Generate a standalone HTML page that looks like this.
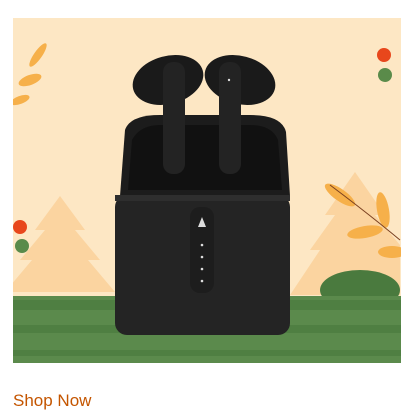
<!DOCTYPE html><html><head><style>
body{margin:0;background:#fff;width:412px;height:413px;overflow:hidden;font-family:"Liberation Sans",sans-serif}
svg{position:absolute;left:13px;top:18px}
a{position:absolute;left:13px;top:391px;color:#c45500;font-size:17px;text-decoration:none}
</style></head><body>
<svg width="388" height="345" viewBox="13 18 388 345">
<rect x="13" y="18" width="388" height="345" fill="#fde7c4"/>
<polygon points="60,196 85,230 75,230 100,260 88,260 115,292 5,292 32,260 20,260 45,230 35,230" fill="#fbd4a0"/>
<polygon points="355,172 385,215 375,215 400,245 400,295 290,295 320,250 310,250 335,215 325,215" fill="#fbd4a0"/>
<circle cx="20" cy="227" r="7" fill="#e8471c"/><circle cx="22" cy="246" r="7" fill="#5a8b4a"/>
<circle cx="384" cy="55" r="7" fill="#e8471c"/><circle cx="385" cy="75" r="7" fill="#5a8b4a"/>
<ellipse cx="30" cy="80" rx="12" ry="5" fill="#f6b04a" transform="rotate(-20 30 80)"/>
<ellipse cx="38" cy="55" rx="14" ry="4" fill="#f6b04a" transform="rotate(-55 38 55)"/>
<ellipse cx="20" cy="100" rx="10" ry="4" fill="#f6b04a" transform="rotate(-20 20 100)"/>
<ellipse cx="340" cy="195" rx="18" ry="6" fill="#f6b04a" transform="rotate(35 340 195)"/>
<ellipse cx="383" cy="210" rx="18" ry="6" fill="#f6b04a" transform="rotate(80 383 210)"/>
<ellipse cx="365" cy="232" rx="18" ry="6" fill="#f6b04a" transform="rotate(-10 365 232)"/>
<ellipse cx="392" cy="252" rx="14" ry="6" fill="#f6b04a"/>
<path d="M330 185 Q370 215 400 240" stroke="#7a4020" fill="none"/>
<ellipse cx="360" cy="290" rx="40" ry="20" fill="#4a7a3e"/>
<rect x="13" y="296" width="388" height="67" fill="#5b8a4c"/>
<rect x="13" y="300" width="388" height="10" fill="#4f7f42"/>
<rect x="13" y="325" width="388" height="8" fill="#4f7f42"/>
<rect x="13" y="350" width="388" height="6" fill="#4f7f42"/>
<path d="M120 196 L125 130 Q130 115 160 115 L250 115 Q282 115 286 132 L290 196 Z" fill="#1c1c1c"/>
<path d="M128 190 L132 140 Q140 125 160 125 L250 125 Q272 125 278 140 L282 190 Z" fill="#111"/>
<rect x="115" y="195" width="175" height="140" rx="12" fill="#242424"/>
<rect x="115" y="195" width="175" height="6" fill="#2e2e2e"/>
<rect x="190" y="207" width="24" height="86" rx="10" fill="#1d1d1d"/>
<g fill="#ddd"><circle cx="202" cy="245" r="1.3"/><circle cx="202" cy="257" r="1.3"/><circle cx="202" cy="269" r="1.3"/><circle cx="202" cy="281" r="1.3"/></g>
<polygon points="202,217 206,227 198,227" fill="#ddd"/>
<ellipse cx="168" cy="80" rx="36" ry="24" fill="#1a1a1a" transform="rotate(-15 168 80)"/>
<ellipse cx="240" cy="80" rx="36" ry="24" fill="#1a1a1a" transform="rotate(15 240 80)"/>
<rect x="163" y="62" width="22" height="112" rx="10" fill="#232323"/>
<rect x="219" y="62" width="22" height="112" rx="10" fill="#232323"/>
<circle cx="229" cy="80" r="1.2" fill="#ddd"/>
</svg>
<a>Shop Now</a>
</body></html>
